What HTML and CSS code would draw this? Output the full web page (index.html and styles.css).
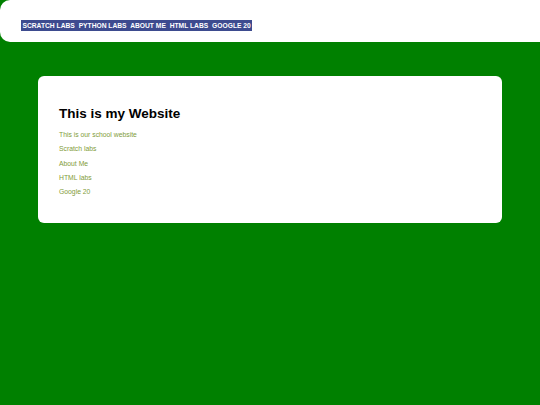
FILE: index.html
```html
<!DOCTYPE html>
<html>
<head>
<meta charset="utf-8">
<link rel="stylesheet" href="styles.css">
</head>
<body>
<header class="top">
  <nav class="nav"><a href="#">SCRATCH LABS</a> <a href="#">PYTHON LABS</a> <a href="#">ABOUT ME</a> <a href="#">HTML LABS</a> <a href="#">GOOGLE 20</a></nav>
</header>
<main class="card">
  <h1 class="title">This is my Website</h1>
  <p class="item">This is our school website</p>
  <p class="item">Scratch labs</p>
  <p class="item">About Me</p>
  <p class="item">HTML labs</p>
  <p class="item">Google 20</p>
</main>
</body>
</html>
```
FILE: styles.css
```css
html, body {
  margin: 0;
  padding: 0;
  background: #008000;
  font-family: "Liberation Sans", Arial, sans-serif;
}
.top {
  display: flex;
  align-items: flex-start;
  background: #ffffff;
  height: 42px;
  border-radius: 10px;
  padding: 20px 0 0 21px;
  box-sizing: border-box;
  width: 550px;
}
.nav {
  background: #3d4b8f;
  font-size: 6.7px;
  font-weight: bold;
  line-height: 11px;
  height: 11px;
  padding: 0 1.5px;
  white-space: nowrap;
}
.nav a {
  color: #ffffff;
  text-decoration: none;
  margin-right: 2px;
}
.nav a:last-child {
  margin-right: 0;
}
.card {
  display: block;
  background: #ffffff;
  margin: 34px 0 0 38px;
  width: 464px;
  height: 147px;
  border-radius: 6px;
  padding: 29px 21px 0;
  box-sizing: border-box;
}
.title {
  margin: 0 0 6px;
  font-size: 13.5px;
  line-height: 17px;
  color: #000000;
}
.item {
  margin: 0;
  font-size: 6.8px;
  line-height: 14.25px;
  color: #7f9c3a;
}
```
